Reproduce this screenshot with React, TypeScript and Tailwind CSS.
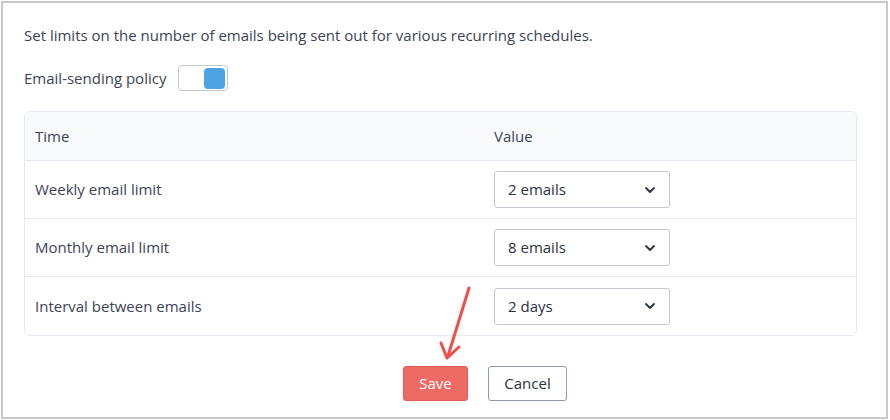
import React from 'react';

const rows = [
  { label: 'Weekly email limit', value: '2 emails' },
  { label: 'Monthly email limit', value: '8 emails' },
  { label: 'Interval between emails', value: '2 days' },
];

function Chevron() {
  return (
    <svg width="12" height="8" viewBox="0 0 12 8" fill="none">
      <path d="M2 2l4 4 4-4" stroke="#2b3242" strokeWidth="1.8" strokeLinecap="round" strokeLinejoin="round" />
    </svg>
  );
}

export default function App() {
  return (
    <div className="w-[890px] h-[420px] bg-white p-px" style={{ fontFamily: '"Open Sans", sans-serif' }}>
      <div className="relative w-[887px] h-[418px] border-2 border-[#c9c9c9] bg-white text-[#3b4456]">
        <div className="pl-[21px] pr-[29px] pt-[22px]">
          <p className="text-[15px] leading-5">
            Set limits on the number of emails being sent out for various recurring schedules.
          </p>

          {/* toggle */}
          <div className="flex items-center gap-[12px] mt-[20px]">
            <span className="text-[15px] leading-5">Email-sending policy</span>
            <div className="w-[50px] h-[26px] border border-[#c4c8ce] rounded-[4px] flex items-center justify-end pr-[2px] bg-white">
              <div className="w-[21px] h-[21px] rounded-[4px] bg-[#4ea3e4]" />
            </div>
          </div>

          {/* table */}
          <div className="mt-[20px] border border-[#e6eaf0] rounded-[6px] overflow-hidden">
            <div className="flex items-center h-[49px] bg-[#f9fafb] border-b border-[#e6eaf0] text-[15px]">
              <div className="w-[469px] pl-[10px]">Time</div>
              <div>Value</div>
            </div>
            {rows.map((r, i) => (
              <div
                key={r.label}
                className={`flex items-center h-[58px] text-[15px] ${i < rows.length - 1 ? 'border-b border-[#e6eaf0]' : ''}`}
              >
                <div className="w-[469px] pl-[10px]">{r.label}</div>
                <div className="w-[176px] h-[37px] border border-[#c4c8ce] rounded-[3px] flex items-center justify-between pl-[13px] pr-[13px] text-[#2b3242]">
                  <span>{r.value}</span>
                  <Chevron />
                </div>
              </div>
            ))}
          </div>

          {/* buttons */}
          <div className="flex gap-[20px] mt-[30px] pl-[379px]">
            <button className="w-[65px] h-[35px] rounded-[3px] bg-[#ee6a64] border border-[#e25b55] text-white text-[15px]">
              Save
            </button>
            <button className="w-[79px] h-[35px] rounded-[3px] bg-white border border-[#8c9bb0] text-[#2b3242] text-[15px]">
              Cancel
            </button>
          </div>
        </div>

        {/* annotation arrow */}
        <svg className="absolute left-[430px] top-[280px]" width="50" height="80" viewBox="0 0 50 80" fill="none">
          <path d="M36 5 L15 73" stroke="#ee4f4a" strokeWidth="3" strokeLinecap="round" />
          <path d="M8 60 L14 75 L26 64" stroke="#ee4f4a" strokeWidth="3" strokeLinecap="round" strokeLinejoin="round" />
        </svg>
      </div>
    </div>
  );
}
